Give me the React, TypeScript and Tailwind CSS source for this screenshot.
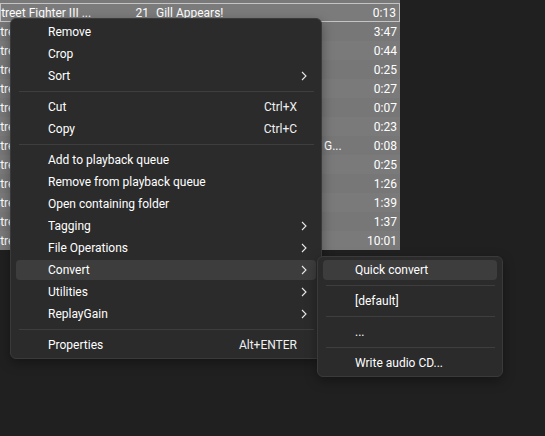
import React from "react";

const font = { fontFamily: 'Roboto, "Noto Sans", sans-serif' };

type Row = { title?: string; num?: string; time: string; sel?: boolean; tail?: string };

const rows: Row[] = [
  { num: "21", title: "Gill Appears!", time: "0:13", sel: true },
  { num: "22", title: "Gill Theme", time: "3:47" },
  { num: "23", title: "Ending", time: "0:44" },
  { num: "24", title: "Win", time: "0:25" },
  { num: "25", title: "Continue", time: "0:27" },
  { num: "26", title: "Game Over", time: "0:07" },
  { num: "27", title: "Name Entry", time: "0:23" },
  { num: "28", title: "Staff Roll", time: "0:08", tail: "G..." },
  { num: "29", title: "Intro", time: "0:25" },
  { num: "30", title: "Select", time: "1:26" },
  { num: "31", title: "Stage", time: "1:39" },
  { num: "32", title: "Stage", time: "1:37" },
  { num: "33", title: "Credits", time: "10:01" },
];

function Chevron() {
  return (
    <svg width="6" height="10" viewBox="0 0 6 10" className="shrink-0">
      <path d="M1 1 L5 5 L1 9" fill="none" stroke="#e8e8e8" strokeWidth="1.1" />
    </svg>
  );
}

type Item =
  | { sep: true }
  | { label: string; shortcut?: string; sub?: boolean; hl?: boolean };

const mainItems: Item[] = [
  { label: "Remove" },
  { label: "Crop" },
  { label: "Sort", sub: true },
  { sep: true },
  { label: "Cut", shortcut: "Ctrl+X" },
  { label: "Copy", shortcut: "Ctrl+C" },
  { sep: true },
  { label: "Add to playback queue" },
  { label: "Remove from playback queue" },
  { label: "Open containing folder" },
  { label: "Tagging", sub: true },
  { label: "File Operations", sub: true },
  { label: "Convert", sub: true, hl: true },
  { label: "Utilities", sub: true },
  { label: "ReplayGain", sub: true },
  { sep: true },
  { label: "Properties", shortcut: "Alt+ENTER" },
];

const subItems: Item[] = [
  { label: "Quick convert", hl: true },
  { sep: true },
  { label: "[default]" },
  { sep: true },
  { label: "..." },
  { sep: true },
  { label: "Write audio CD..." },
];

function MenuList({ items }: { items: Item[] }) {
  return (
    <div className="flex flex-col py-[2px]">
      {items.map((it, i) =>
        "sep" in it ? (
          <div key={i} className="h-[9px] flex items-center">
            <div className="h-px bg-[#3e3e3e] ml-[8px] mr-[7px] flex-1" />
          </div>
        ) : (
          <div key={i} className="h-[22px] py-px px-[5px]">
            <div
              className={`h-full flex items-center rounded-[4px] pl-[32px] pr-[9px] ${
                it.hl ? "bg-[#3d3d3d]" : ""
              }`}
            >
              <span className="flex-1 text-[12px] text-white whitespace-nowrap leading-none">
                {it.label}
              </span>
              {it.shortcut && (
                <span className="text-[12px] text-[#f0f0f0] whitespace-nowrap leading-none mr-[10px]">
                  {it.shortcut}
                </span>
              )}
              {it.sub && <Chevron />}
            </div>
          </div>
        )
      )}
    </div>
  );
}

export default function App() {
  return (
    <div className="relative w-[545px] h-[436px] bg-[#202020] overflow-hidden" style={font}>
      {/* playlist */}
      <div className="w-[400px] flex flex-col bg-[#787878]">
        <div className="h-[3px] bg-[#797979]" />
        {rows.map((r, i) => (
          <div
            key={i}
            className={`h-[19px] flex items-center text-[12px] text-white whitespace-nowrap ${
              r.sel
                ? "border border-[#c4c4c4] bg-[#7b7b7b]"
                : i % 2 === 0
                ? "bg-[#7a7a7a]"
                : "bg-[#777777]"
            }`}
          >
            <div className="w-[130px] overflow-hidden shrink-0">
              <span className="block ml-[-7px]">Street Fighter III ...</span>
            </div>
            <div className="w-[18px] text-right shrink-0">{r.num}</div>
            <div className="w-[189px] ml-[7px] shrink-0 overflow-hidden flex">
              {r.tail ? (
                <>
                  <span className="w-[169px] overflow-hidden shrink-0">{r.title}</span>
                  <span>{r.tail}</span>
                </>
              ) : (
                <span>{r.title}</span>
              )}
            </div>
            <div className="flex-1 text-right pr-[3px]">{r.time}</div>
          </div>
        ))}
      </div>

      {/* main context menu */}
      <div className="absolute left-[10px] top-[18px] w-[312px] bg-[#2b2b2b] border border-[#3a3a3a] rounded-[6px] shadow-[0_4px_12px_rgba(0,0,0,0.35)]">
        <MenuList items={mainItems} />
      </div>

      {/* submenu */}
      <div className="absolute left-[317px] top-[256px] w-[186px] bg-[#2b2b2b] border border-[#3a3a3a] rounded-[6px] shadow-[0_4px_12px_rgba(0,0,0,0.35)]">
        <MenuList items={subItems} />
      </div>
    </div>
  );
}
